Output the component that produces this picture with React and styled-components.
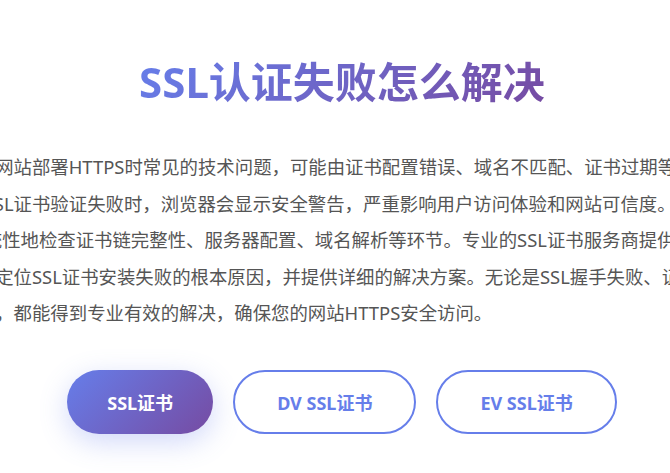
import React from "react";
import styled, { createGlobalStyle } from "styled-components";

const GlobalStyle = createGlobalStyle`
    html, body {
        margin: 0;
        padding: 0;
        background: #fff;
        overflow: hidden;
    }
    body {
        font-family: "Noto Sans", "Noto Sans CJK SC", sans-serif;
    }
`

const Section = styled.section`
    width: 684px;
    padding: 57px 0 40px 0;
    display: flex;
    flex-direction: column;
    align-items: center;
`

const Title = styled.h2`
    margin: 0 0 42px 0;
    font-size: 42px;
    line-height: 50px;
    font-weight: 700;
    background: linear-gradient(135deg, #667eea 0%, #764ba2 100%);
    -webkit-background-clip: text;
    background-clip: text;
    color: transparent;
`

// 描述段落比容器宽，两侧超出部分被裁掉
const Desc = styled.p`
    flex-shrink: 0;
    width: 974px;
    margin: 0;
    font-size: 18.4px;
    line-height: 36.5px;
    color: #555;
    text-align: left;
    white-space: nowrap;
`

const ButtonRow = styled.div`
    display: flex;
    gap: 20px;
    margin-top: 38px;
`

const Button = styled.a`
    display: inline-flex;
    align-items: center;
    justify-content: center;
    height: 64px;
    box-sizing: border-box;
    padding: ${props => props.primary ? '0 40px' : '0 42px'};
    border-radius: 32px;
    font-size: 18px;
    font-weight: 700;
    text-decoration: none;
    cursor: pointer;
    color: ${props => props.primary ? '#fff' : '#667eea'};
    background: ${props => props.primary ? 'linear-gradient(135deg, #667eea 0%, #764ba2 100%)' : '#fff'};
    border: ${props => props.primary ? 'none' : '2px solid #667eea'};
    box-shadow: ${props => props.primary ? '0 8px 28px rgba(102, 126, 234, 0.3)' : 'none'};
`

const lines = [
    "SSL认证失败也是网站部署HTTPS时常见的技术问题，可能由证书配置错误、域名不匹配、证书过期等多种原因引起。",
    "种原因引起。当SSL证书验证失败时，浏览器会显示安全警告，严重影响用户访问体验和网站可信度。因此需",
    "要由专业人员系统性地检查证书链完整性、服务器配置、域名解析等环节。专业的SSL证书服务商提供技术支持，",
    "采用SSL检测工具定位SSL证书安装失败的根本原因，并提供详细的解决方案。无论是SSL握手失败、证书链不完整",
    "SSL证书不受信任，都能得到专业有效的解决，确保您的网站HTTPS安全访问。",
]

const App = () => {
    return (
        <>
            <GlobalStyle />
            <Section>
                <Title>SSL认证失败怎么解决</Title>
                <Desc>
                    {lines.map((line, i) => (
                        <React.Fragment key={i}>
                            {line}
                            {i < lines.length - 1 && <br />}
                        </React.Fragment>
                    ))}
                </Desc>
                <ButtonRow>
                    <Button primary={1}>SSL证书</Button>
                    <Button>DV SSL证书</Button>
                    <Button>EV SSL证书</Button>
                </ButtonRow>
            </Section>
        </>
    )
}

export default App;
